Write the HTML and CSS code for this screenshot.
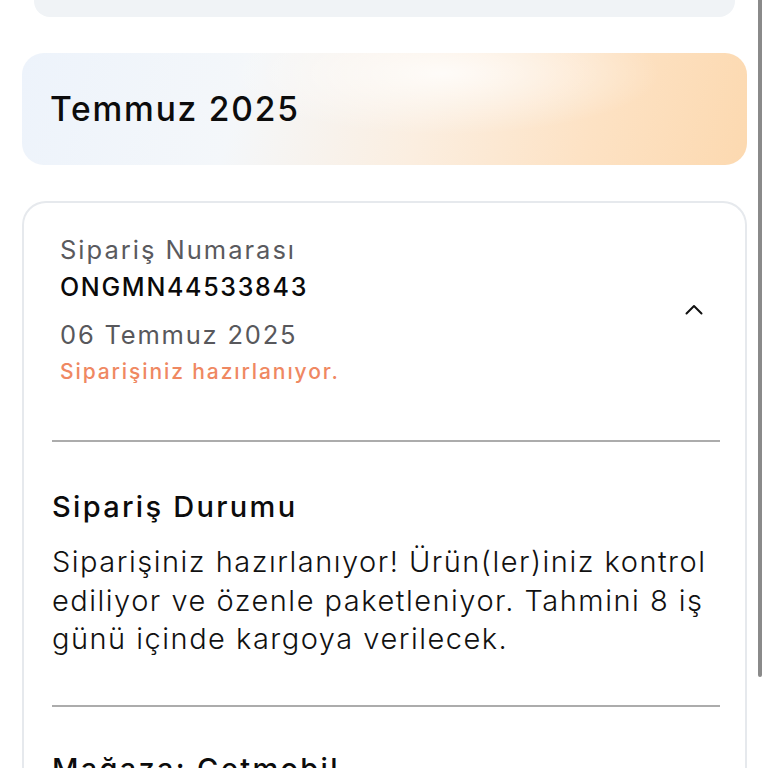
FILE: index.html
```html
<!DOCTYPE html>
<html lang="tr">
<head>
<meta charset="utf-8">
<title>Siparişlerim</title>
<link rel="stylesheet" href="styles.css">
</head>
<body>
<div class="page">
  <div class="top-card"></div>

  <div class="month-banner">
    <h2 class="month-title">Temmuz 2025</h2>
  </div>

  <div class="order-card">
    <div class="order-head">
      <div class="order-info">
        <div class="label">Sipariş Numarası</div>
        <div class="order-no">ONGMN44533843</div>
        <div class="order-date">06 Temmuz 2025</div>
        <div class="order-state">Siparişiniz hazırlanıyor.</div>
      </div>
      <svg class="chevron" width="18" height="11" viewBox="0 0 18 11" aria-hidden="true">
        <path d="M1.5 9.5 L9 2 L16.5 9.5" fill="none" stroke="#111" stroke-width="2" stroke-linecap="round" stroke-linejoin="round"/>
      </svg>
    </div>

    <div class="divider"></div>

    <div class="section">
      <h3 class="section-title">Sipariş Durumu</h3>
      <p class="section-text">Siparişiniz hazırlanıyor! Ürün(ler)iniz kontrol ediliyor ve özenle paketleniyor. Tahmini 8 iş günü içinde kargoya verilecek.</p>
    </div>

    <div class="divider"></div>

    <div class="section store">
      <h3 class="section-title">Mağaza: Getmobil</h3>
    </div>
  </div>
</div>
<div class="scrollbar"></div>
</body>
</html>
```

FILE: styles.css
```css
* { box-sizing: border-box; }

html, body {
  margin: 0;
  padding: 0;
  background: #ffffff;
  overflow: hidden;
}

body {
  font-family: Inter, "Noto Sans", "Liberation Sans", sans-serif;
  color: #111111;
  width: 768px;
  height: 768px;
}

.page {
  padding: 0 21px 0 22px;
}

.top-card {
  height: 17px;
  margin: 0 12px;
  background: #f0f3f6;
  border-radius: 0 0 16px 16px;
}

.month-banner {
  margin-top: 36px;
  height: 112px;
  border-radius: 22px;
  display: flex;
  align-items: center;
  padding-left: 28px;
  background:
    radial-gradient(ellipse 30% 55% at 58% 18%, rgba(255,255,255,0.8), rgba(255,255,255,0) 100%),
    linear-gradient(104deg, #edf3fb 0%, #f4f7fa 30%, #fbeee0 55%, #fde2c4 78%, #fcd9b0 100%);
}

.month-title {
  margin: 0;
  font-size: 33.5px;
  font-weight: 500;
  letter-spacing: 1.8px;
  color: #0c0c0c;
}

.order-card {
  margin-top: 36px;
  border: 2px solid #e6e9ed;
  border-bottom: none;
  border-radius: 24px 24px 0 0;
  padding: 0 25px 0 28px;
  height: 600px;
}

.order-head {
  display: flex;
  align-items: center;
  justify-content: space-between;
  padding: 28px 17px 53px 8px;
}

.label {
  font-size: 25.5px;
  line-height: 38px;
  letter-spacing: 2px;
  color: #5a5a5e;
}

.order-no {
  font-size: 25px;
  line-height: 36px;
  font-weight: 500;
  letter-spacing: 1.7px;
  color: #0a0a0a;
}

.order-date {
  margin-top: 12px;
  font-size: 25.5px;
  line-height: 36px;
  letter-spacing: 1.8px;
  color: #58585c;
}

.order-state {
  margin-top: 4px;
  font-size: 21px;
  line-height: 30px;
  font-weight: 500;
  letter-spacing: 1.9px;
  color: #ef8862;
}

.chevron {
  display: block;
}

.divider {
  height: 2px;
  background: #acacac;
}

.section {
  padding: 45px 0 46px;
}

.section-title {
  margin: 0;
  font-size: 29px;
  line-height: 40px;
  font-weight: 500;
  letter-spacing: 2.3px;
  color: #0c0c0c;
}

.section-text {
  margin: 16px -8px 0 0;
  font-size: 29px;
  line-height: 38.5px;
  font-weight: 300;
  letter-spacing: 1.5px;
  color: #111111;
}

.store {
  padding-top: 42px;
}

.scrollbar {
  position: absolute;
  left: 758px;
  top: 0;
  width: 4px;
  height: 677px;
  background: #8a8a8a;
  border-radius: 0 0 2px 2px;
}
```
